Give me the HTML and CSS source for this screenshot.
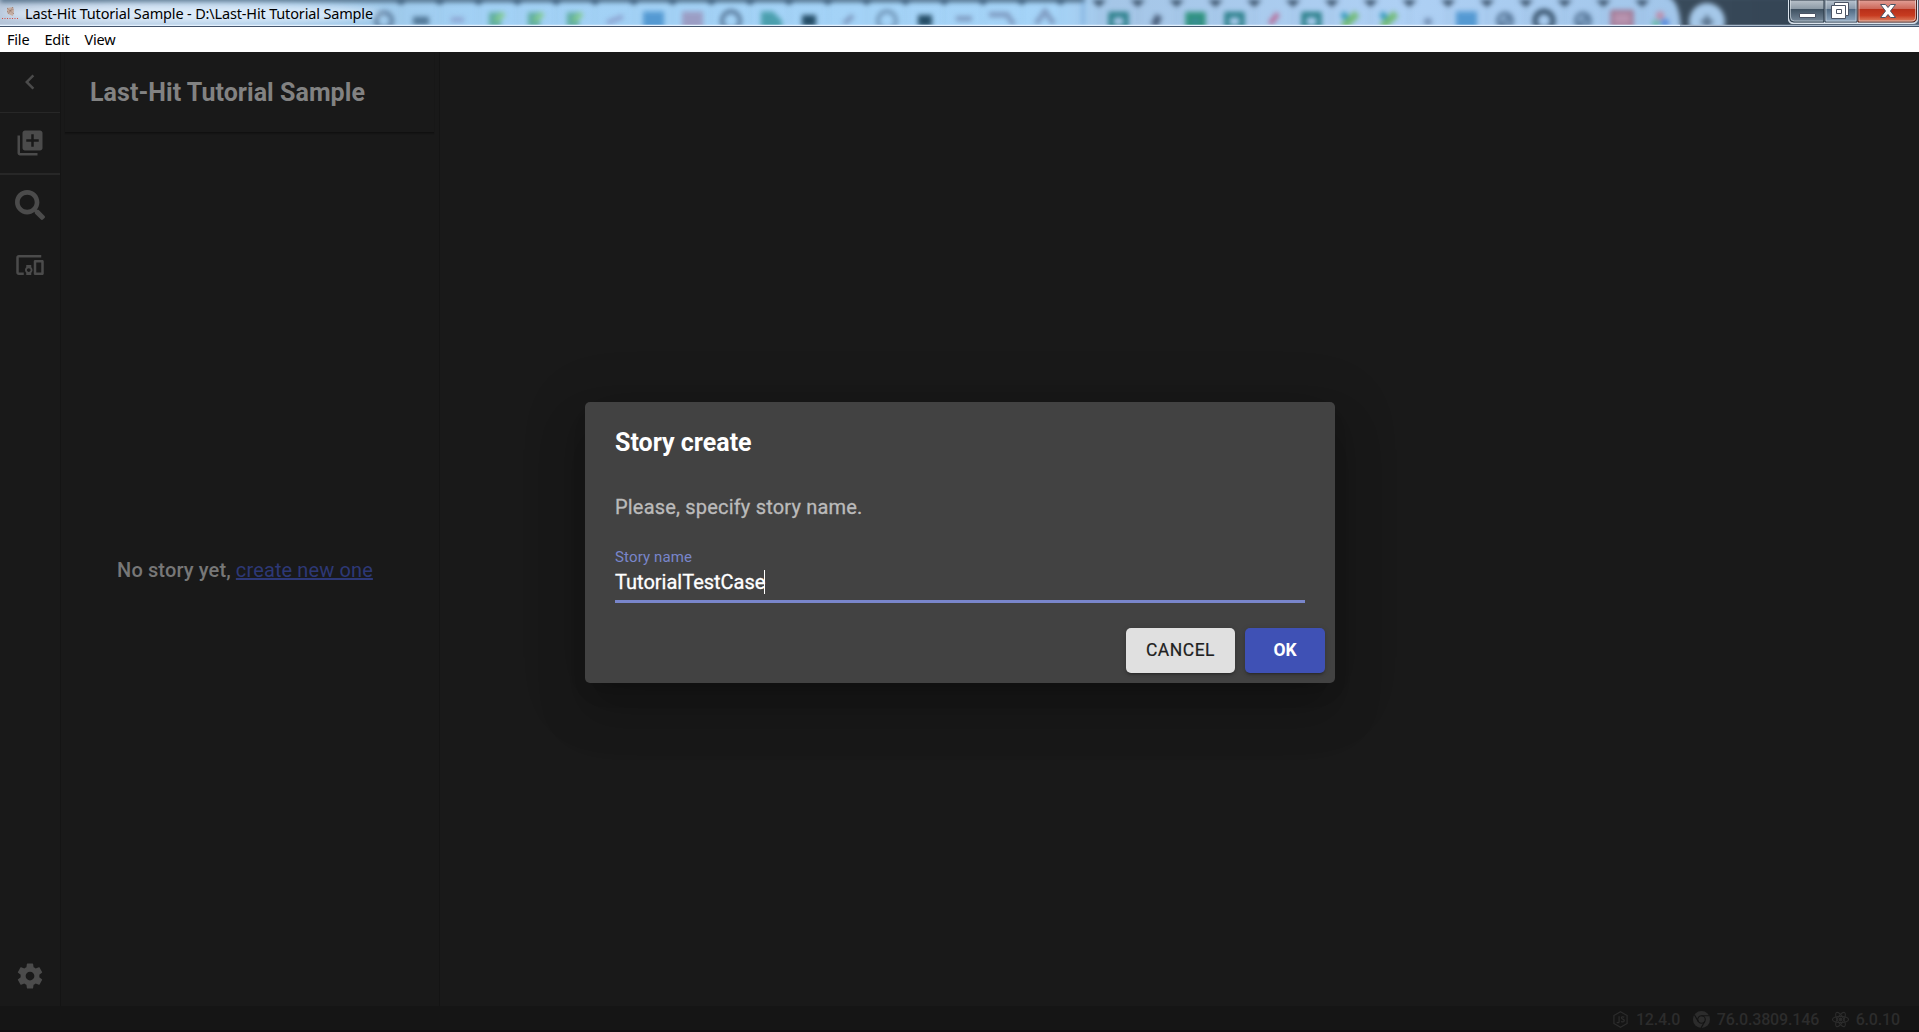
FILE: index.html
```
<!DOCTYPE html>
<html lang="en">
<head>
<meta charset="utf-8">
<title>Last-Hit Tutorial Sample</title>
<link rel="stylesheet" href="styles.css">
</head>
<body>
<div class="window">
  <header class="titlebar">
    <svg class="glass" viewBox="0 0 1919 25" preserveAspectRatio="none" aria-hidden="true">
      <defs>
        <filter id="soft" x="-5%" y="-50%" width="110%" height="200%" color-interpolation-filters="sRGB"><feGaussianBlur stdDeviation="2.800"/></filter>
        <filter id="wide" x="-20%" y="-100%" width="140%" height="300%"><feGaussianBlur stdDeviation="8 4"/></filter>
        <linearGradient id="sky"><stop offset="0" stop-color="#b4c4d8"/><stop offset=".19" stop-color="#9fc9ea"/><stop offset=".25" stop-color="#a2d1f5"/><stop offset=".55" stop-color="#a5d4f8"/><stop offset=".58" stop-color="#a5c6e7"/><stop offset=".73" stop-color="#aed0f4"/><stop offset=".87" stop-color="#a2c6ea"/></linearGradient>
        <linearGradient id="night"><stop offset="0" stop-color="#394b5b"/><stop offset=".5" stop-color="#344454"/><stop offset="1" stop-color="#53657a"/></linearGradient>
        <pattern id="notch" x="1079" width="38.8" height="25" patternUnits="userSpaceOnUse"><path d="M9-2h22l-6 4-5 5-5-5z" fill="#31475e"/><path d="M20 3v22" stroke="#87a9ca" opacity=".45"/></pattern>
        <pattern id="notch2" x="382" width="38.8" height="25" patternUnits="userSpaceOnUse"><path d="M10-2h18l-9 7z" fill="#34536f"/><path d="M19 3v22" stroke="#82abcf" opacity=".3"/></pattern>
      </defs>
      <rect width="1919" height="25" fill="url(#sky)"/>
      <g filter="url(#soft)">
        <rect y="-3" width="1085" height="5" fill="#49667f"/>
        <rect x="382" y="-2" width="697" height="27" fill="url(#notch2)"/>
        <rect x="1079" y="-2" width="600" height="27" fill="url(#notch)"/>
        <path d="M1666-4q14 3 15 33h250v-34z" fill="url(#night)"/>
        <circle cx="1707" cy="21" r="18" fill="#a5c8e9"/>
        <path d="M1701 21h12M1707 15v12" stroke="#566f89" stroke-width="4"/>
        <g fill="none" stroke="#58789a" stroke-width="4">
          <circle cx="384" cy="20" r="8"/><circle cx="731" cy="20" r="9"/><circle cx="887" cy="20" r="9" opacity=".65"/>
          <circle cx="1505" cy="20" r="7"/><path d="M1500 25l11-10"/><circle cx="1544" cy="20" r="9" stroke="#37526c" stroke-width="5"/>
          <circle cx="1583" cy="20" r="7"/><path d="M1578 25l11-10"/>
        </g>
        <path d="M413 20h16" stroke="#507696" stroke-width="8"/>
        <path d="M451 19h13M607 22l16-6" stroke="#8da4d1" stroke-width="5"/>
        <g fill="#5eaca0"><rect x="489" y="12" width="12" height="14"/><rect x="528" y="12" width="12" height="14"/><rect x="567" y="12" width="12" height="14"/></g>
        <path d="M495 20l9-7M534 20l9-7M573 20l9-7" stroke="#83cb91" stroke-width="5"/>
        <g fill="#5499d2"><rect x="643" y="11" width="21" height="17"/><rect x="1456" y="11" width="21" height="17"/></g>
        <path d="M682 11h21v17h-21z" fill="#9b9dc4"/><path d="M1612 11h20v14h-20z" fill="#b793af" stroke="#9d708b" stroke-width="3"/>
        <path d="M761 11h12l9 9v8h-21z" fill="#4b9fae"/>
        <path d="M802 20h14M918 20h14" stroke="#244c66" stroke-width="11"/>
        <path d="M844 23l9-8M956 18h16M989 14h18l7 10M1036 23l9-12 9 12" fill="none" stroke="#7e9ac0" stroke-width="5"/>
        <path d="M1083 0v25" stroke="#5d94cd" stroke-width="3" opacity=".5"/>
        <g fill="none" stroke="#267c86" stroke-width="5"><path d="M1111 14h15v13h-15zM1227 14h15v13h-15zM1304 14h15v13h-15z"/><path d="M1188 14h15v13h-15z" fill="#398e92" stroke="#2c927b"/></g>
        <path d="M1154 25l5-10" stroke="#475c78" stroke-width="7"/>
        <path d="M1270 23l8-10" stroke="#b76f9b" stroke-width="5"/>
        <path d="M1342 13l8 7M1381 13l8 7" stroke="#3399bb" stroke-width="6"/><path d="M1343 26l14-13M1382 26l14-13" stroke="#72bb77" stroke-width="7"/>
        <circle cx="1428" cy="21" r="4" fill="#7390b4"/>
        <circle cx="1660" cy="15" r="4" fill="#c08ba8"/><circle cx="1656" cy="23" r="4" fill="#6bb9ac"/><circle cx="1665" cy="22" r="4" fill="#5689dc"/>
      </g>
      <ellipse cx="190" cy="13" rx="190" ry="9" fill="#eaf4ff" opacity=".8" filter="url(#wide)"/>
      <path d="M0 24.5h1680" stroke="#e5f2ff" stroke-width="1.400"/>
      <path d="M1680 24.500h239" stroke="#a9b9cb" stroke-width="1.400"/>
    </svg>
    <div class="caption">
      <svg class="app-icon" viewBox="0 0 16 16"><path d="M5 3l6-1 1 4-1 5-5-2-1-3z" fill="#c5aea2"/><path d="M5 3l7 6M11 2L6 9M5 7l7-3" stroke="#94766a" stroke-dasharray="1 1"/><path d="M0 13.500h16" stroke="#d44d42" stroke-dasharray="1 1.500"/></svg>
      <span class="caption-text">Last-Hit Tutorial Sample - D:\Last-Hit Tutorial Sample</span>
    </div>
    <svg class="controls" viewBox="0 0 131 25">
      <defs>
        <linearGradient id="steel" x2="0" y2="1"><stop stop-color="#b9c2ca"/><stop offset=".42" stop-color="#8a98a4"/><stop offset=".43" stop-color="#3f5161"/><stop offset="1" stop-color="#77899b"/></linearGradient>
        <linearGradient id="steel2" x2="0" y2="1"><stop stop-color="#bac5d0"/><stop offset=".42" stop-color="#8697a9"/><stop offset=".43" stop-color="#506a83"/><stop offset="1" stop-color="#92abc4"/></linearGradient>
        <linearGradient id="red" x2="0" y2="1"><stop stop-color="#e3a198"/><stop offset=".42" stop-color="#cc6556"/><stop offset=".43" stop-color="#b8301a"/><stop offset=".7" stop-color="#c73b20"/><stop offset="1" stop-color="#df8665"/></linearGradient>
      </defs>
      <path d="M.5 0v19q0 4.500 4.500 4.500h120q4.500 0 4.500-4.500V0" fill="#c5d0dc" stroke="#dbe4ed"/>
      <path d="M1.500 0v18q0 4 4 4H36V0z" fill="url(#steel)" stroke="#273543"/>
      <path d="M37 0v22h32V0z" fill="url(#steel2)" stroke="#3a4959"/>
      <path d="M70 0v22h54q4.500 0 4.500-4V0z" fill="url(#red)" stroke="#52201b"/>
      <path d="M2.500 0v17q0 4 4 4H35M38 0v21h30V0M71 0v21h52q4.500 0 4.500-4V0" fill="none" stroke="#e4ebf1" opacity=".55"/>
      <path d="M11.500 13.500h16v4h-16z" fill="#fff" stroke="#4b5465"/>
      <path d="M46.500 2.500h14v13h-3v3h-14v-13h3z" fill="#fff" stroke="#4b5465"/>
      <path d="M46.500 5.500h11v10M48.500 9.500h5v4h-5z" fill="none" stroke="#4b5465"/>
      <path d="M92.500 4.500h5l2.500 3 2.500-3h5l-5 6.500 5 6.500h-5l-2.500-3-2.500 3h-5l5-6.500z" fill="#fff" stroke="#4b5465"/>
    </svg>
  </header>
  <nav class="menubar"><span>File</span><span>Edit</span><span>View</span></nav>
  <div class="workspace">
    <aside class="rail">
      <button class="rail-item collapse" aria-label="Collapse"><svg width="30" height="30" viewBox="0 0 24 24"><path d="M15.410 7.410L14 6l-6 6 6 6 1.410-1.410L10.830 12z"/></svg></button>
      <button class="rail-item add" aria-label="Add"><svg width="30" height="30" viewBox="0 0 24 24"><path d="M4 6H2v14c0 1.100.9 2 2 2h14v-2H4V6zm16-4H8c-1.100 0-2 .9-2 2v12c0 1.100.9 2 2 2h12c1.100 0 2-.9 2-2V4c0-1.100-.9-2-2-2zm-1 9h-4v4h-2v-4H9V9h4V5h2v4h4v2z"/></svg></button>
      <button class="rail-item search" aria-label="Search"><svg width="30" height="30" viewBox="0 0 512 512"><path d="M505 442.700L405.300 343c-4.500-4.500-10.600-7-17-7H372c27.600-35.300 44-79.700 44-128C416 93.100 322.900 0 208 0S0 93.100 0 208s93.100 208 208 208c48.300 0 92.700-16.400 128-44v16.300c0 6.400 2.500 12.500 7 17l99.700 99.700c9.400 9.400 24.600 9.400 33.900 0l28.300-28.300c9.400-9.400 9.400-24.600.1-34zM208 336c-70.700 0-128-57.200-128-128 0-70.700 57.200-128 128-128 70.700 0 128 57.200 128 128 0 70.700-57.200 128-128 128z"/></svg></button>
      <button class="rail-item devices" aria-label="Devices"><svg width="30" height="30" viewBox="0 0 24 24"><path d="M3 6h18V4H3c-1.100 0-2 .9-2 2v12c0 1.100.9 2 2 2h4v-2H3V6zm10 6H9v1.780c-.61.55-1 1.330-1 2.220s.39 1.670 1 2.220V20h4v-1.780c.61-.55 1-1.340 1-2.220s-.39-1.670-1-2.220V12zm-2 5.500c-.83 0-1.500-.67-1.500-1.500s.67-1.500 1.500-1.500 1.500.67 1.500 1.500-.67 1.500-1.500 1.500zM22 8h-6c-.5 0-1 .5-1 1v10c0 .5.500 1 1 1h6c.5 0 1-.5 1-1V9c0-.5-.5-1-1-1zm-1 10h-4v-8h4v8z"/></svg></button>
      <button class="rail-item settings" aria-label="Settings"><svg width="30" height="30" viewBox="0 0 24 24"><path d="M19.430 12.980c.04-.32.07-.64.07-.98s-.03-.66-.07-.98l2.110-1.650c.19-.15.240-.42.120-.64l-2-3.460c-.12-.22-.39-.3-.61-.22l-2.490 1c-.52-.4-1.080-.73-1.690-.98l-.38-2.650C14.460 2.180 14.250 2 14 2h-4c-.25 0-.46.18-.49.42l-.38 2.650c-.61.25-1.170.59-1.690.98l-2.490-1c-.23-.09-.49 0-.61.22l-2 3.460c-.13.22-.07.49.12.64l2.110 1.650c-.04.32-.07.65-.07.98s.03.66.07.98l-2.110 1.650c-.19.15-.24.42-.12.64l2 3.460c.12.22.39.3.61.22l2.490-1c.52.4 1.080.73 1.690.98l.38 2.650c.03.24.240.42.490.42h4c.25 0 .46-.18.490-.42l.38-2.650c.61-.25 1.170-.59 1.690-.98l2.490 1c.23.09.49 0 .61-.22l2-3.460c.12-.22.07-.49-.12-.64l-2.110-1.650zM12 15.500c-1.930 0-3.500-1.570-3.500-3.500s1.570-3.500 3.500-3.500 3.500 1.570 3.500 3.500-1.570 3.500-3.500 3.500z"/></svg></button>
    </aside>
    <section class="stories">
      <h1>Last-Hit Tutorial Sample</h1>
      <div class="empty"><span>No story yet,&nbsp;</span><a>create new one</a></div>
    </section>
    <main class="canvas">
      <section class="dialog" role="dialog">
        <h2>Story create</h2>
        <p>Please, specify story name.</p>
        <div class="field"><label>Story name</label><div class="value"><span>TutorialTestCase</span><i class="caret"></i></div></div>
        <div class="actions"><button class="btn cancel">CANCEL</button><button class="btn ok">OK</button></div>
      </section>
    </main>
  </div>
  <footer class="status">
    <span class="version node"><svg width="17" height="17" viewBox="0 0 18 18" fill="none" stroke="currentColor" stroke-width="1.300"><path d="M9 .8l7 4v8.400l-7 4-7-4V4.800zM7.500 5.500v6q0 1.500-2.500.5M13 6.500q-3-1-3 .7c0 1.800 3 1 3 2.900 0 1.700-2 1.600-3.300.9"/></svg>12.4.0</span>
    <span class="version chrome"><svg width="17" height="17" viewBox="0 0 18 18"><circle cx="9" cy="9" r="9" fill="currentColor"/><g fill="none" stroke="#141414" stroke-width="1.200"><circle cx="9" cy="9" r="4"/><path d="M9 5h8M5.500 11L1.600 4.200M12.500 11l-4 7"/></g></svg>76.0.3809.146</span>
    <span class="version electron"><svg width="17" height="17" viewBox="0 0 18 18" fill="none" stroke="currentColor" stroke-width="1.100"><ellipse cx="9" cy="9" rx="8.500" ry="3.300"/><ellipse cx="9" cy="9" rx="8.500" ry="3.300" transform="rotate(60 9 9)"/><ellipse cx="9" cy="9" rx="8.500" ry="3.300" transform="rotate(120 9 9)"/><circle cx="9" cy="9" r="1.500" fill="currentColor"/></svg>6.0.10</span>
  </footer>
</div>
</body>
</html>
```
FILE: styles.css
```
* { box-sizing: border-box; }
body { margin: 0; font-family: Roboto, sans-serif; background: #191919; overflow: hidden; }
button { border: 0; font: inherit; padding: 0; background: none; }
.window { display: flex; flex-direction: column; width: 1919px; height: 1032px; }
.titlebar { position: relative; display: flex; justify-content: space-between; height: 27px; flex: none; border-bottom: 1px solid #43546c; background: #c5d9ec; }
.glass { position: absolute; left: 0; top: 0; width: 1919px; height: 26px; }
.caption { position: relative; display: flex; align-items: flex-start; padding-left: 2px; }
.app-icon { width: 16px; height: 16px; margin-top: 5px; }
.caption-text { margin-left: 7px; font: 14.500px/26px "Noto Sans", sans-serif; letter-spacing: -0.160px; color: #000; white-space: nowrap; }
.controls { position: relative; width: 131px; height: 25px; }
.menubar { display: flex; gap: 15px; height: 25px; flex: none; padding-left: 7px; background: #fff; color: #000; font: 14.500px/25px "Noto Sans", sans-serif; letter-spacing: -0.200px; }
.workspace { display: flex; flex: 1; min-height: 0; }
.rail { display: flex; flex-direction: column; width: 61px; border-right: 1px solid #141414; flex: none; color: #4b4b4b; }
.rail-item { display: flex; align-items: center; justify-content: center; height: 61px; width: 60px; color: inherit; flex: none; }
.rail-item svg { fill: currentColor; }
.collapse { border-bottom: 1px solid #272727; }
.add { height: 62px; border-bottom: 2px solid #272727; }
.search { height: 60px; }
.devices { height: 60px; }
.settings { margin-top: auto; }
.stories { display: flex; flex-direction: column; width: 379px; border-right: 1px solid #141414; padding: 0 5px 0 4px; flex: none; }
h1 { margin: 0; height: 81px; padding-left: 25px; line-height: 82px; font-size: 25px; font-weight: 700; letter-spacing: 0.050px; color: #828282; border-bottom: 1px solid #101010; box-shadow: 0 1px 1px #141414; }
.empty { display: flex; align-items: center; justify-content: center; flex: 1; font-size: 20px; letter-spacing: 0.120px; color: #777; font-weight: 500; padding-right: 9px; }
.empty a { color: #2d3876; text-decoration: underline; font-weight: 400; }
.canvas { display: flex; flex: 1; padding: 350px 0 0 145px; }
.dialog { width: 750px; height: 281px; border-radius: 5px; background: #424242; color: #fff; box-shadow: 0 14px 19px -9px rgba(0,0,0,.2), 0 30px 48px 4px rgba(0,0,0,.14), 0 11px 58px 10px rgba(0,0,0,.12); }
h2 { margin: 0; padding: 21px 30px 19px; font-size: 25px; line-height: 40px; font-weight: 700; letter-spacing: 0; }
p { margin: 0; padding: 10px 30px 0; font-size: 20px; line-height: 30px; letter-spacing: 0.188px; color: #bbb; -webkit-text-stroke: 0.300px; }
.field { margin: 24px 30px 0; height: 57px; border-bottom: 3px solid #7986cb; }
.field label { display: block; padding-top: 1px; color: #7986cb; font-size: 15px; line-height: 20px; letter-spacing: 0.140px; }
.value { display: flex; align-items: center; height: 30px; font-size: 20px; -webkit-text-stroke: 0.300px; }
.caret { width: 1px; height: 24px; background: #fff; margin-left: -1px; }
.actions { display: flex; justify-content: flex-end; gap: 10px; padding: 25px 10px 10px; }
.btn { height: 45px; padding-bottom: 2px; border-radius: 5px; font-size: 17.500px; letter-spacing: 0.500px; box-shadow: 0 3px 2px -2px rgba(0,0,0,.2), 0 2px 3px rgba(0,0,0,.14), 0 1px 6px rgba(0,0,0,.12); }
.cancel { width: 109px; background: #e0e0e0; color: #212121; -webkit-text-stroke: 0.200px; }
.ok { width: 80px; background: #3f51b5; color: #fff; font-weight: 700; letter-spacing: 0; }
.status { display: flex; justify-content: flex-end; gap: 12.500px; height: 26px; flex: none; padding: 2px 19px 0 0; background: #151515; border-bottom: 2px solid #110d0f; color: #2c2c2c; font-size: 16px; font-weight: 500; letter-spacing: -0.150px; }
.version { display: flex; align-items: center; gap: 7px; }
```
